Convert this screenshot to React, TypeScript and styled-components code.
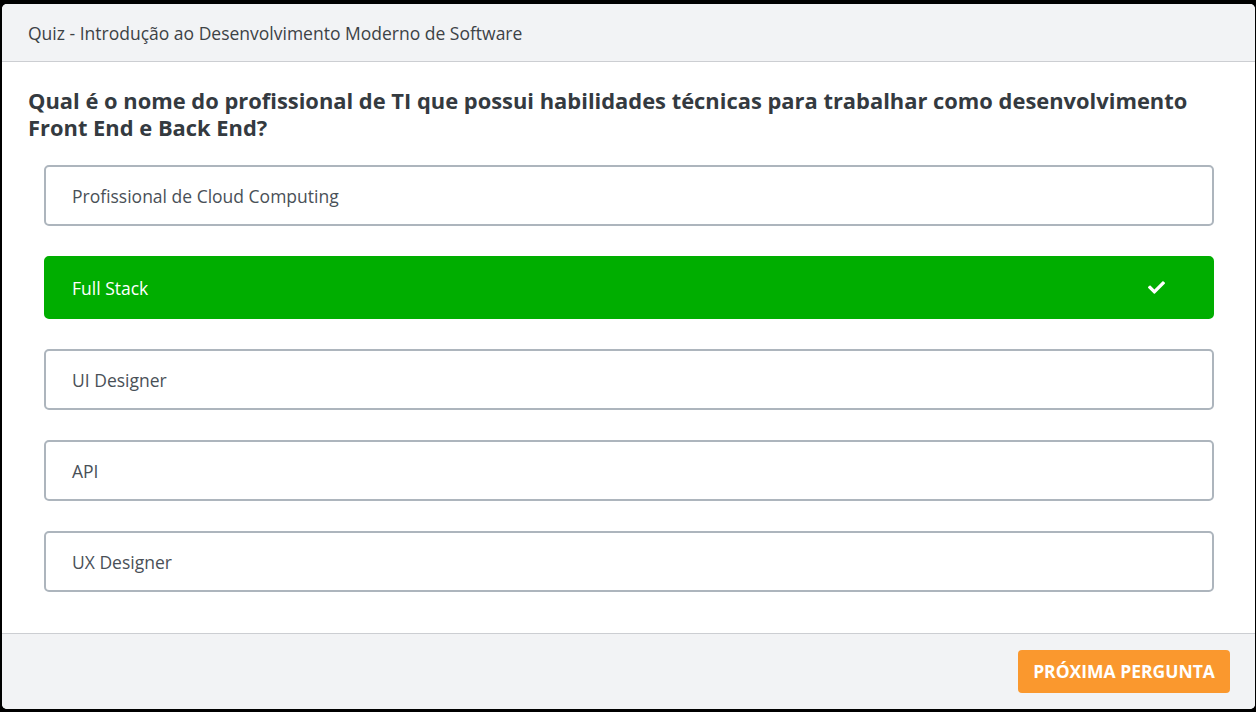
import React from "react";
import styled, { createGlobalStyle } from "styled-components";
import { FaCheck } from "react-icons/fa";

const Global = createGlobalStyle`
  html, body { margin: 0; padding: 0; background: #000; }
  body { font-family: "Open Sans", "Noto Sans", sans-serif; }
  * { box-sizing: border-box; }
`;

const Page = styled.div`
  width: 1256px;
  height: 712px;
  padding: 4px 1px 3px 2px;
  background: #000;
`;

const Modal = styled.div`
  height: 100%;
  background: #fff;
  border-radius: 5px;
  overflow: hidden;
  display: flex;
  flex-direction: column;
`;

const Header = styled.header`
  height: 58px;
  flex: none;
  background: #f2f3f5;
  border-bottom: 1px solid #ccced2;
  display: flex;
  align-items: center;
  padding: 0 26px;
  font-size: 17.5px;
  color: #3d4246;
`;

const Body = styled.main`
  flex: 1;
  padding: 25px 26px 0;
`;

const Question = styled.h2`
  margin: 0 0 24px;
  font-size: 21.9px;
  line-height: 27px;
  font-weight: 700;
  color: #343a40;
`;

const Options = styled.div`
  display: flex;
  flex-direction: column;
  gap: 30px;
  margin: 0 15px 0 16px;
`;

const Option = styled.div<{ $correct?: boolean }>`
  height: ${(p) => (p.$correct ? "63px" : "61px")};
  border: 2px solid ${(p) => (p.$correct ? "#00ae00" : "#adb5bd")};
  background: ${(p) => (p.$correct ? "#00ae00" : "#fff")};
  color: ${(p) => (p.$correct ? "#fff" : "#495057")};
  border-radius: 5px;
  display: flex;
  align-items: center;
  justify-content: space-between;
  padding: 0 47px 0 26px;
  font-size: 17.5px;
  font-weight: ${(p) => (p.$correct ? 500 : 400)};
`;

const Footer = styled.footer`
  height: 76px;
  flex: none;
  background: #f2f3f5;
  border-top: 1px solid #ccced2;
  display: flex;
  align-items: center;
  justify-content: flex-end;
  padding: 0 25px 1px;
`;

const NextButton = styled.button`
  height: 43px;
  width: 212px;
  padding: 0;
  background: #fa982e;
  color: #fff;
  border: none;
  border-radius: 4px;
  font-family: "Open Sans", "Noto Sans", sans-serif;
  font-size: 17.5px;
  font-weight: 700;
  text-transform: uppercase;
  cursor: pointer;
`;

const options = [
  { label: "Profissional de Cloud Computing" },
  { label: "Full Stack", correct: true },
  { label: "UI Designer" },
  { label: "API" },
  { label: "UX Designer" },
];

export default function App() {
  return (
    <>
      <Global />
      <Page>
        <Modal>
          <Header>Quiz - Introdução ao Desenvolvimento Moderno de Software</Header>
          <Body>
            <Question>
              Qual é o nome do profissional de TI que possui habilidades técnicas para trabalhar como desenvolvimento Front End e Back End?
            </Question>
            <Options>
              {options.map((o) => (
                <Option key={o.label} $correct={o.correct}>
                  <span>{o.label}</span>
                  {o.correct && <FaCheck size={17} />}
                </Option>
              ))}
            </Options>
          </Body>
          <Footer>
            <NextButton>Próxima pergunta</NextButton>
          </Footer>
        </Modal>
      </Page>
    </>
  );
}
